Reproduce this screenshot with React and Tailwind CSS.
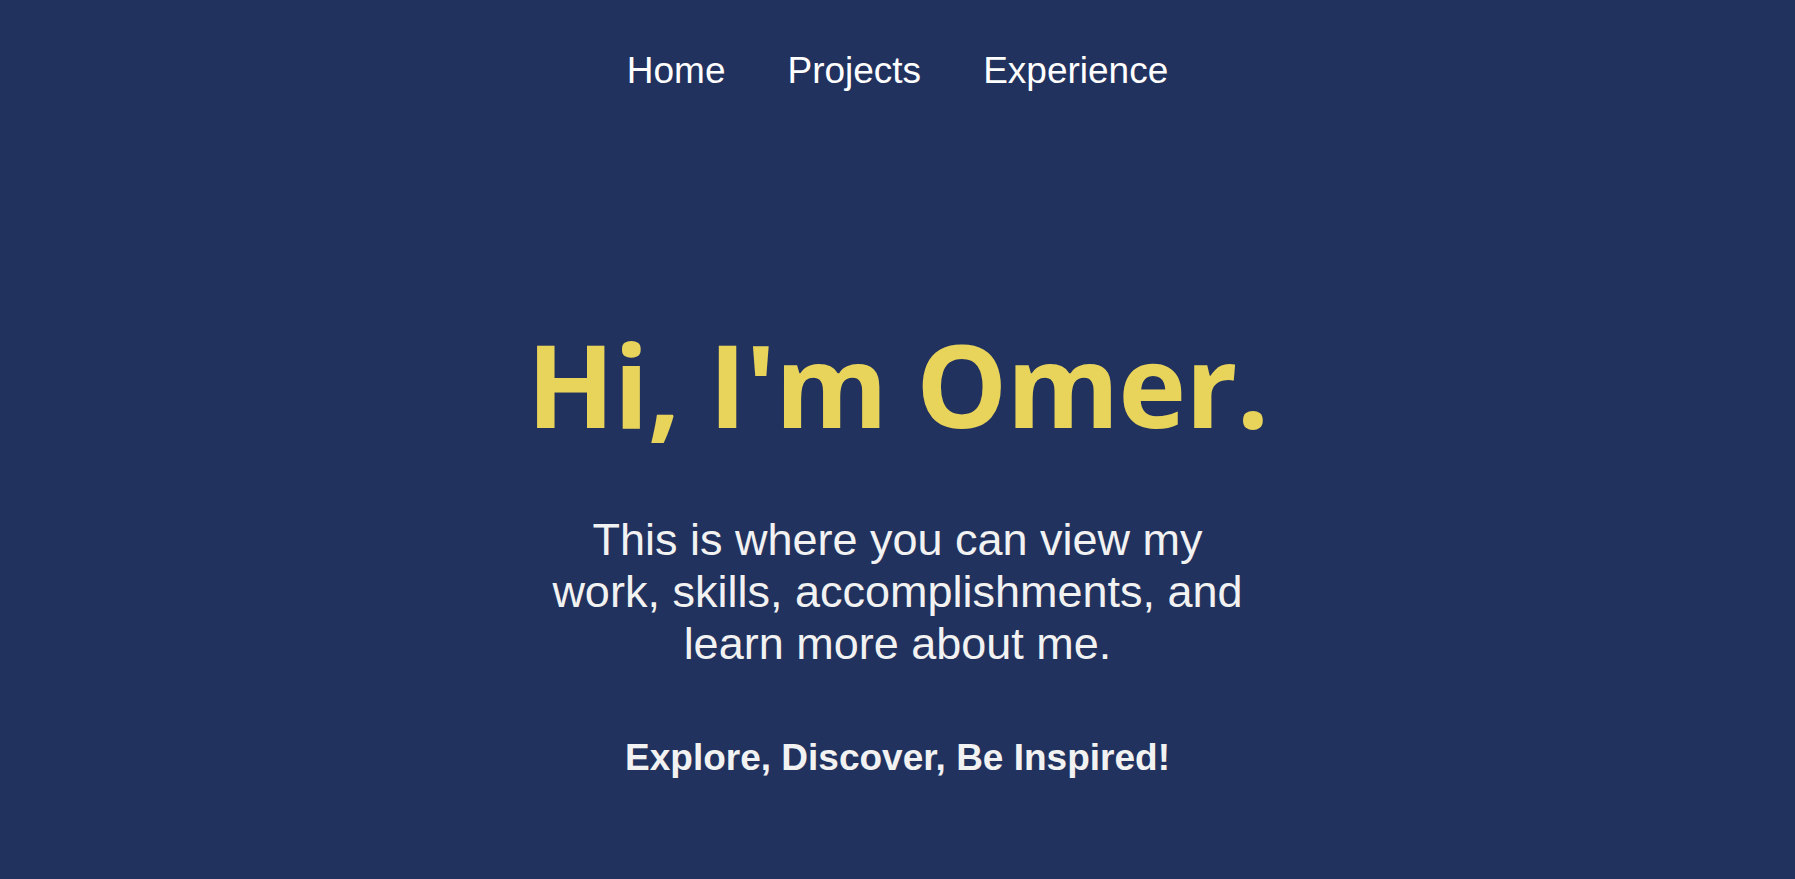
export default function App() {
    const links = ['Home', 'Projects', 'Experience'];

    return (
        <div className="min-h-screen w-full bg-[#22325e] font-['Liberation_Sans',Arial,sans-serif]">
            <nav className="flex justify-center gap-[62px] pt-[50px]">
                {links.map((link) => (
                    <a key={link} href="#" className="text-[37px] leading-[42.5px] text-white">
                        {link}
                    </a>
                ))}
            </nav>

            <section className="flex flex-col items-center text-center">
                <h1 className="mt-[233px] font-['Open_Sans',sans-serif] text-[115px] font-bold leading-none tracking-[-1px] text-[#e8d35b]">
                    Hi, I'm Omer.
                </h1>
                <p className="mt-[73px] max-w-[700px] text-[45px] leading-[52px] text-[#f2f2f2]">
                    This is where you can view my work, skills, accomplishments, and learn more about me.
                </p>
                <h3 className="mt-[67px] text-[37px] font-bold leading-[42.5px] text-[#f2f2f2]">
                    Explore, Discover, Be Inspired!
                </h3>
            </section>
        </div>
    );
}
